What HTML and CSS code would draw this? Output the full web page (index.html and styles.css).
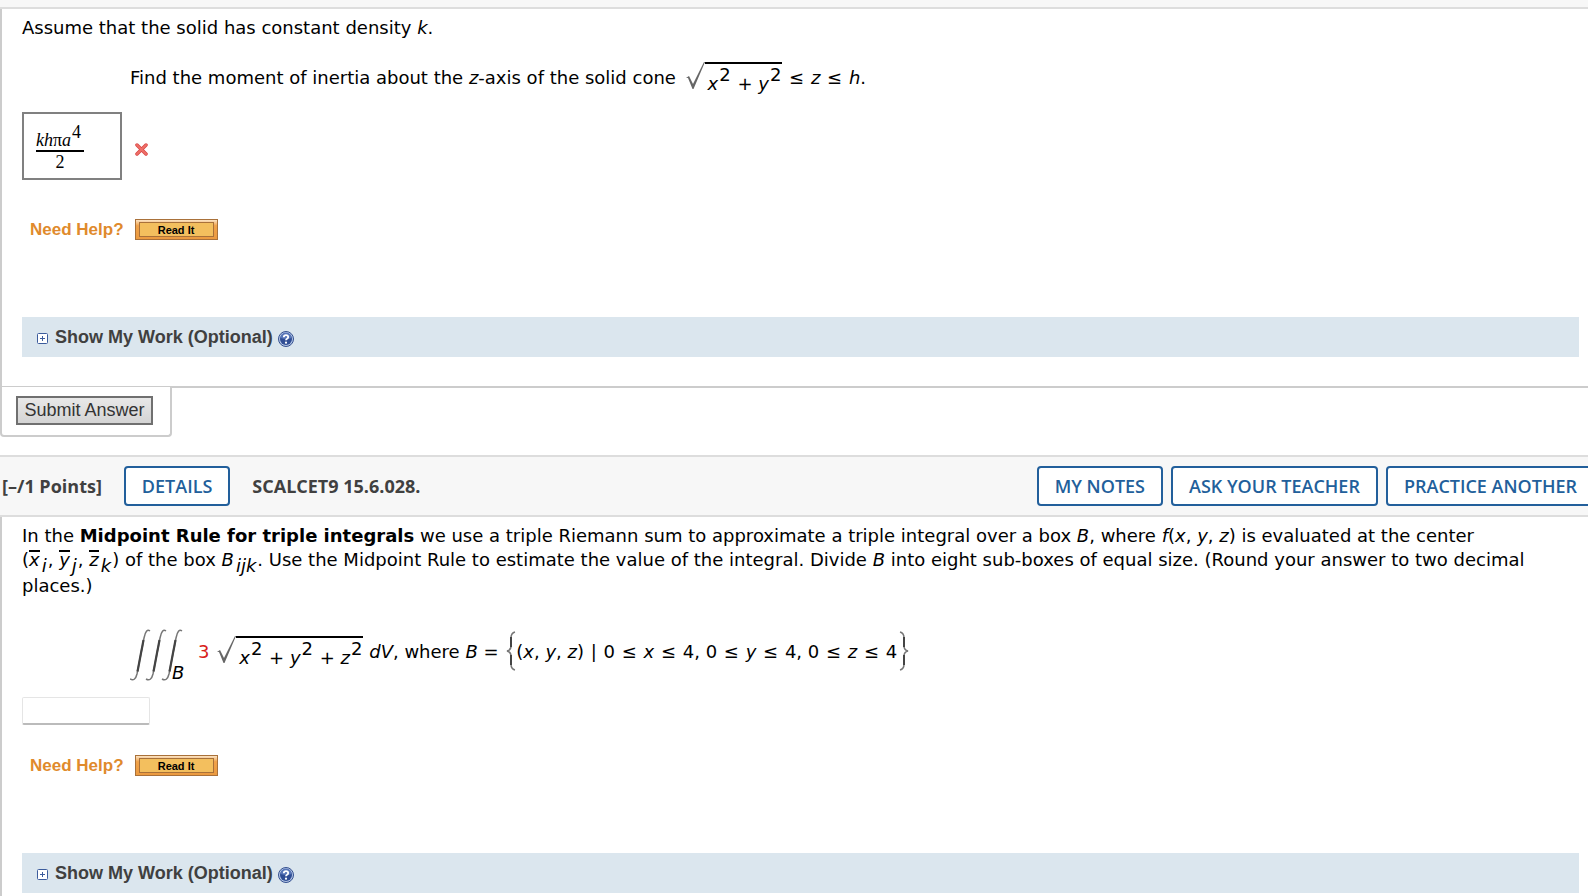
FILE: index.html
```html
<!DOCTYPE html>
<html lang="en">
  <head>
    <meta charset="utf-8">
    <title>Homework</title>
    <link rel="stylesheet" href="styles.css">
  </head>
  <body>
    <div class="top-strip"></div>

    <div class="question">
      <p class="text">Assume that the solid has constant density <i>k</i>.</p>
      <div class="equation">Find the moment of inertia about the <i>z</i>-axis of the solid cone <span class="root"><svg class="radical" width="19" height="27" viewBox="0 0 19 27"><path d="M0 16l3-2 4 8L18 0h1L7.500 27h-1L2 16z" fill="#666"/></svg><span class="radicand"><i>x</i><sup>2</sup> + <i>y</i><sup>2</sup></span></span> <span class="op">≤</span> <i>z</i> <span class="op">≤</span> <i>h</i>.</div>
      <div class="answer">
        <div class="math-box">
          <span class="fraction">
            <span class="numerator"><i>kh</i>π<i>a</i><sup>4</sup></span>
            <span class="denominator">2</span>
          </span>
        </div>
        <svg class="wrong" width="13" height="13" viewBox="0 0 13 13"><path d="M2 2l9 9M11 2l-9 9" stroke="#d84343" stroke-width="3.500" stroke-linecap="round"/><path d="M2 2l9 9M11 2l-9 9" stroke="#ee7068" stroke-width="2" stroke-linecap="round"/></svg>
      </div>
      <div class="help">
        <span class="help-label">Need Help?</span>
        <button class="read-it"><span>Read It</span></button>
      </div>
      <div class="show-work">
        <button class="expand" aria-label="Expand"><svg width="11" height="11" viewBox="0 0 11 11"><rect x=".5" y=".5" width="10" height="10" rx="1" fill="#fff" stroke="#3c5c9c"/><path d="M3 5.500h5M5.500 3v5" stroke="#3c5c9c"/></svg></button>
        <span class="work-label">Show My Work (Optional)</span>
        <a class="info" href="#" aria-label="Help"><svg width="16" height="16" viewBox="0 0 16 16"><circle cx="8" cy="8" r="7.500" fill="#b4c6e6" stroke="#34508f"/><circle cx="8" cy="8" r="6" fill="#2f4d94"/><path d="M2.500 7a5.500 5.500 0 0 1 11 0q-5 2-11 0z" fill="#5876b8"/><path d="M5.800 6.200q.1-2 2.200-2t2.200 1.800q0 1.100-1.100 1.700T8 9.300" stroke="#fff" stroke-width="1.800"/><circle cx="8" cy="11.700" r="1.100" fill="#fff"/></svg></a>
      </div>
    </div>
    <div class="submit-box">
      <button class="submit">Submit Answer</button>
    </div>

    <div class="question-header">
      <span class="points">[–/1 Points]</span>
      <button class="header-button">DETAILS</button>
      <span class="question-name">SCALCET9 15.6.028.</span>
      <div class="header-actions">
        <button class="header-button">MY NOTES</button>
        <button class="header-button">ASK YOUR TEACHER</button>
        <button class="header-button">PRACTICE ANOTHER</button>
      </div>
    </div>

    <div class="question last">
      <p class="text">In the <b>Midpoint Rule for triple integrals</b> we use a triple Riemann sum to approximate a triple integral over a box <i>B</i>, where <i>f</i>(<i>x</i>, <i>y</i>, <i>z</i>) is evaluated at the center<br>(<i class="bar">x</i><sub>i</sub>, <i class="bar">y</i><sub>j</sub>, <i class="bar">z</i><sub>k</sub>) of the box <i>B</i><sub>ijk</sub>. Use the Midpoint Rule to estimate the value of the integral. Divide <i>B</i> into eight sub-boxes of equal size. (Round your answer to two decimal<br>places.)</p>
      <div class="equation integral-equation"><svg class="integrals" width="54" height="52" viewBox="0 0 54 52"><g id="integral"><path d="M0 50q5 3 7-5l7-36q2-10 6-7" stroke="#777" stroke-width="1.500"/><path d="M7.500 42.500L13.500 11" stroke="#444" stroke-width="2.200"/></g><use href="#integral" x="16"/><use href="#integral" x="32"/></svg><sub class="region">B</sub> <span class="coefficient">3</span> <span class="root"><svg class="radical" width="19" height="27" viewBox="0 0 19 27"><path d="M0 16l3-2 4 8L18 0h1L7.500 27h-1L2 16z" fill="#666"/></svg><span class="radicand"><i>x</i><sup>2</sup> + <i>y</i><sup>2</sup> + <i>z</i><sup>2</sup></span></span> <i>dV</i>, where <i>B</i> = <svg class="brace" width="10" height="40" viewBox="0 0 10 40"><path d="M9 1Q5 2 5 7v8q0 4-4 5q4 1 4 5v8q0 5 4 6" stroke="#777" stroke-width="1.500"/><path d="M5 6v10M5 24v10" stroke="#444" stroke-width="2"/></svg>(<i>x</i>, <i>y</i>, <i>z</i>) <span class="op">|</span> 0 <span class="op">≤</span> <i>x</i> <span class="op">≤</span> 4, 0 <span class="op">≤</span> <i>y</i> <span class="op">≤</span> 4, 0 <span class="op">≤</span> <i>z</i> <span class="op">≤</span> 4<svg class="brace" width="10" height="40" viewBox="0 0 10 40"><path d="M1 1Q5 2 5 7v8q0 4 4 5q-4 1-4 5v8q0 5-4 6" stroke="#777" stroke-width="1.500"/><path d="M5 6v10M5 24v10" stroke="#444" stroke-width="2"/></svg></div>
      <div class="answer blank-answer">
        <input class="answer-input" type="text" aria-label="Answer">
      </div>
      <div class="help">
        <span class="help-label">Need Help?</span>
        <button class="read-it"><span>Read It</span></button>
      </div>
      <div class="show-work">
        <button class="expand" aria-label="Expand"><svg width="11" height="11" viewBox="0 0 11 11"><rect x=".5" y=".5" width="10" height="10" rx="1" fill="#fff" stroke="#3c5c9c"/><path d="M3 5.500h5M5.500 3v5" stroke="#3c5c9c"/></svg></button>
        <span class="work-label">Show My Work (Optional)</span>
        <a class="info" href="#" aria-label="Help"><svg width="16" height="16" viewBox="0 0 16 16"><circle cx="8" cy="8" r="7.500" fill="#b4c6e6" stroke="#34508f"/><circle cx="8" cy="8" r="6" fill="#2f4d94"/><path d="M2.500 7a5.500 5.500 0 0 1 11 0q-5 2-11 0z" fill="#5876b8"/><path d="M5.800 6.200q.1-2 2.200-2t2.200 1.800q0 1.100-1.100 1.700T8 9.300" stroke="#fff" stroke-width="1.800"/><circle cx="8" cy="11.700" r="1.100" fill="#fff"/></svg></a>
      </div>
    </div>
  </body>
</html>
```
FILE: styles.css
```css
* {
  box-sizing: border-box;
}
body {
  margin: 0;
  overflow: hidden;
  background: #fff;
  color: #000;
  font-family: Verdana, "DejaVu Sans", sans-serif;
  font-size: 18px;
  line-height: 24px;
}
button {
  margin: 0;
  padding: 0;
  cursor: pointer;
}
svg {
  fill: none;
}
.top-strip {
  height: 9px;
  background: #f7f7f7;
  border-bottom: 2px solid #ddd;
}
.question {
  padding: 7px 9px 29px 20px;
  border-left: 2px solid #ccc;
  border-bottom: 2px solid #ccc;
}
.last {
  border-bottom: none;
}
.text {
  margin: 0;
  white-space: nowrap;
}
sup, sub {
  font-size: 18px;
}
sup {
  margin: 0 1px;
  vertical-align: 9px;
  line-height: 0;
}
sub {
  margin: 0 1px 0 2px;
  font-style: italic;
  vertical-align: -6px;
  line-height: 16px;
}
.bar {
  border-top: 2px solid #000;
  display: inline-block;
  line-height: 16px;
}

/* equations */
.equation {
  margin: 22px 0 16px 108px;
  white-space: nowrap;
}
.integral-equation {
  margin-top: 31px;
}
.root {
  margin-left: 4px;
}
.radical {
  vertical-align: -5px;
}
.radicand {
  display: inline-block;
  vertical-align: -6px;
  padding: 8px 0 0 3px;
  border-top: 2px solid #000;
}
.integrals {
  vertical-align: -23px;
}
.region {
  vertical-align: -21px;
  line-height: 0;
  margin: 0 8px 0 -12px;
}
.coefficient {
  margin-right: -2px;
  color: #d8201a;
}
.op {
  margin: 0 1px;
}
.brace {
  margin-left: 2px;
  vertical-align: -13px;
}

/* answers */
.answer {
  display: flex;
  align-items: center;
  gap: 13px;
  margin-bottom: 39px;
}
.blank-answer {
  margin-bottom: 30px;
}
.math-box {
  min-width: 100px;
  height: 68px;
  padding: 12px;
  border: 2px solid #808080;
  font-family: "Liberation Serif", serif;
}
.fraction {
  display: inline-flex;
  flex-direction: column;
  min-width: 48px;
}
.numerator {
  padding-top: 4px;
  line-height: 20px;
  border-bottom: 2px solid #000;
}
.numerator sup {
  vertical-align: 8px;
}
.denominator {
  line-height: 20px;
  text-align: center;
}
.wrong {
  margin-top: 6px;
}
.answer-input {
  width: 128px;
  height: 28px;
  padding: 4px;
  border: 1px solid #e5e5e5;
  border-bottom: 2px solid #bbb;
  border-radius: 2px;
}
.help {
  display: flex;
  align-items: center;
  gap: 11px;
  height: 21px;
  margin: 0 8px 77px;
}
.help-label {
  color: #e08a2c;
  font: bold 17px "Liberation Sans", Arial, sans-serif;
}
.read-it {
  width: 83px;
  height: 21px;
  padding: 2px 3px;
  border: 1px solid #a9713a;
  background: linear-gradient(#fbe3c4, #f0a24a 30%, #eb9a40);
  color: #000;
}
.read-it span {
  display: block;
  padding-top: 1px;
  border: 1px solid #a9713a;
  background: #f3bf5e;
  font: bold 11px/12px "Liberation Sans", Arial, sans-serif;
}
.show-work {
  display: flex;
  align-items: center;
  height: 40px;
  padding-left: 15px;
  background: #dbe6ee;
}
.expand {
  display: flex;
  margin: 3px 7px 0 0;
  border: none;
  background: none;
}
.work-label {
  color: #404040;
  font: bold 18px "Liberation Sans", Arial, sans-serif;
}
.info {
  display: flex;
  margin: 4px 0 0 5px;
}

/* submit */
.submit-box {
  width: 172px;
  margin: -1px 0 18px;
  padding: 9px 14px 10px;
  background: #fff;
  border: 2px solid #ccc;
  border-top: none;
  border-radius: 0 0 4px 4px;
}
.submit {
  display: block;
  width: 137px;
  height: 29px;
  border: 2px solid #707070;
  background: linear-gradient(#e8e8e8, #d4d4d4);
  color: #333;
  font: 18px "Liberation Sans", Arial, sans-serif;
  white-space: nowrap;
}

/* question header */
.question-header {
  display: flex;
  align-items: center;
  height: 62px;
  margin-right: -7px;
  padding-left: 2px;
  background: #f7f7f7;
  border-top: 2px solid #ddd;
  border-bottom: 2px solid #ddd;
  color: #404040;
  font: bold 18px "Open Sans", sans-serif;
  white-space: nowrap;
}
.points {
  margin-right: 22px;
}
.question-name {
  margin-left: 22px;
}
.header-actions {
  display: flex;
  gap: 8px;
  margin-left: auto;
}
.header-button {
  height: 40px;
  padding: 0 16px;
  border: 2px solid #225f9b;
  border-radius: 4px;
  background: #fff;
  color: #225f9b;
  font: 600 18px "Open Sans", sans-serif;
}
```
